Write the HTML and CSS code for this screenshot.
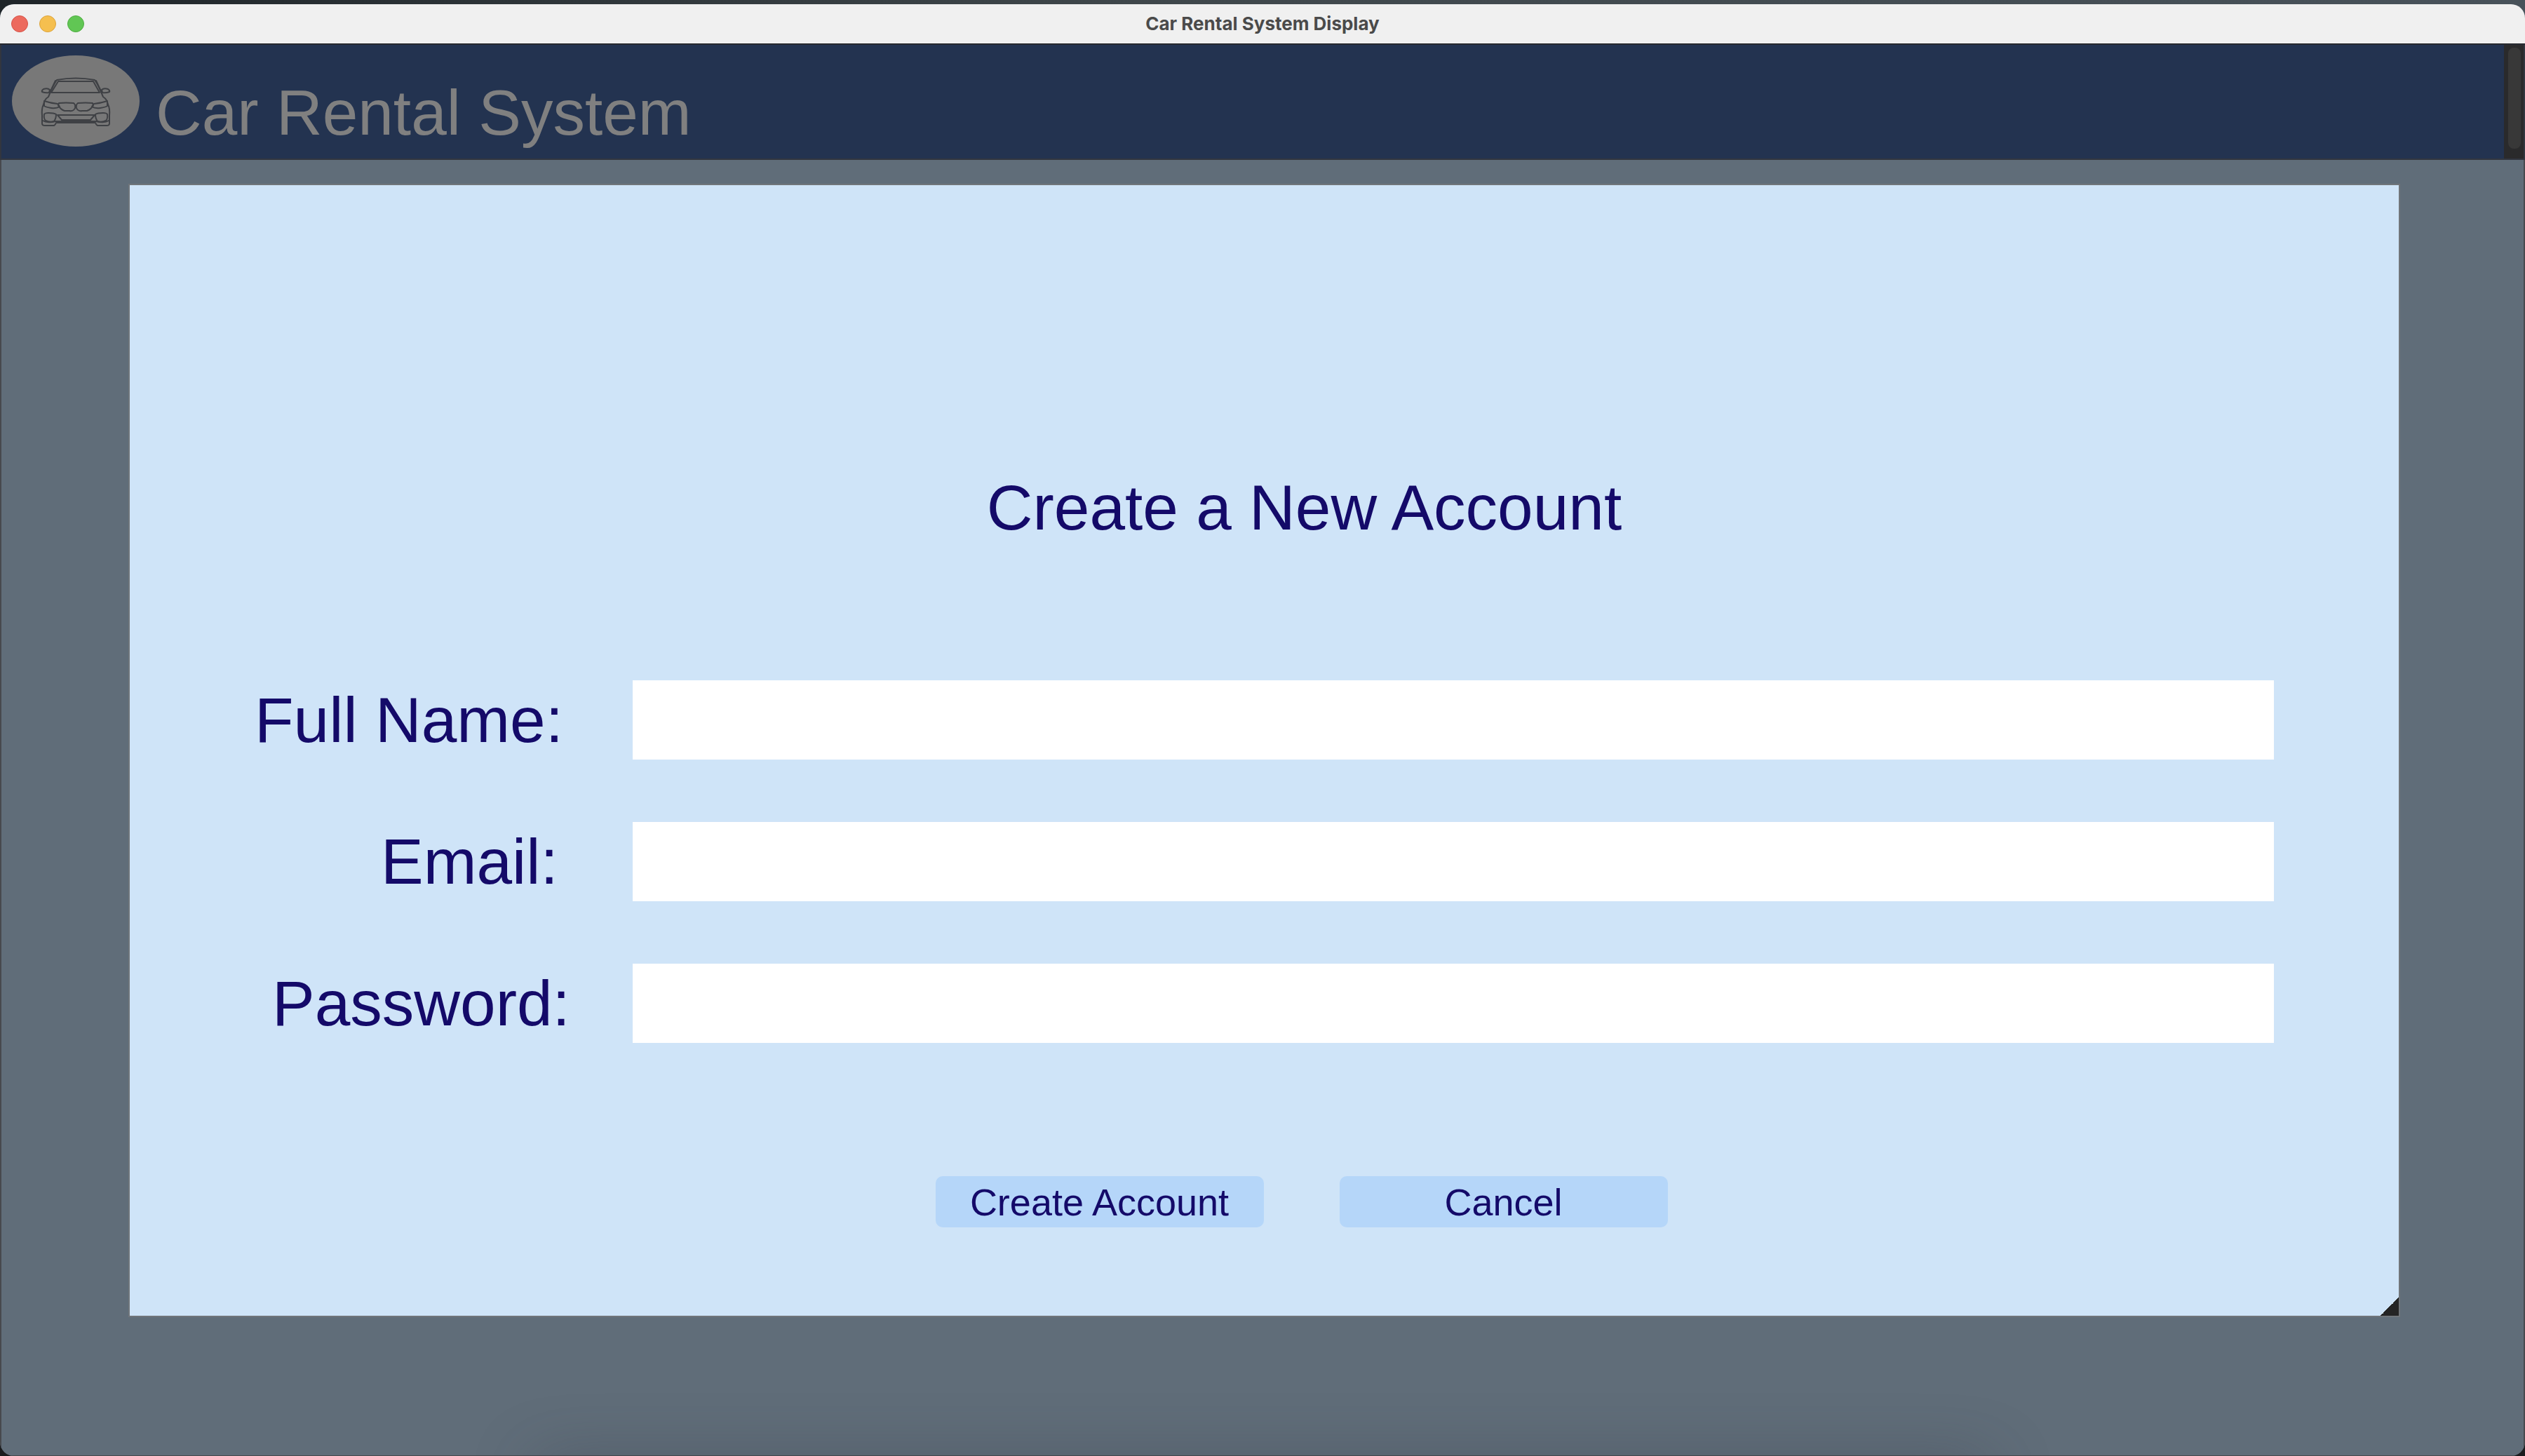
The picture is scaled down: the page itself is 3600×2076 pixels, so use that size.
FILE: index.html
```html
<!DOCTYPE html>
<html lang="en">
<head>
<meta charset="utf-8">
<title>Car Rental System Display</title>
<link rel="stylesheet" href="styles.css">
</head>
<body>
<div class="window">
  <div class="titlebar">
    <div class="lights">
      <button class="light light-close" type="button" aria-label="Close"></button>
      <button class="light light-minimize" type="button" aria-label="Minimize"></button>
      <button class="light light-zoom" type="button" aria-label="Zoom"></button>
    </div>
    <div class="window-title">Car Rental System Display</div>
  </div>
  <header class="app-header">
    <div class="brand">
      <svg class="logo" viewBox="0 0 182 130" aria-hidden="true">
        <ellipse cx="91" cy="65" rx="91" ry="65" fill="#787878"/>
        <g fill="none" stroke="#3f4145" stroke-width="2" stroke-linejoin="round" stroke-linecap="round">
          <path d="M64 35Q91 30 118 35M64 35Q59 42 52 59Q46 63 45 70M118 35Q123 42 130 59Q136 63 137 70"/>
          <path d="M66 37H116L125 53H56Z"/>
          <path d="M62 36L54 53M120 36L128 53"/>
          <path d="M54 49Q51 46 45 48Q42 50 43 52Q48 54 53 53ZM128 49Q131 46 137 48Q140 50 139 52Q134 54 129 53Z"/>
          <path d="M46 65Q55 68 65 69L68 73Q64 76 56 75Q49 74 46 72ZM136 65Q127 68 117 69L114 73Q118 76 126 75Q133 74 136 72Z"/>
          <path d="M67 68Q77 67 88 68Q91 70 90 75Q88 80 82 79H75Q69 77 66 71ZM115 68Q105 67 94 68Q91 70 92 75Q94 80 100 79H107Q113 77 116 71Z"/>
          <path d="M45 70Q42 76 43 86V97Q43 100 47 100H60Q62 99 63 96H119Q120 99 122 100H135Q139 100 139 97V86Q140 76 137 70"/>
          <path d="M46 84Q47 82 52 82Q60 82 63 84Q63 90 60 94Q54 96 48 93Q45 90 46 84ZM136 84Q135 82 130 82Q122 82 119 84Q119 90 122 94Q128 96 134 93Q137 90 136 84Z"/>
          <path d="M65 85H118L112 92H71Z"/>
          <path d="M44 93Q50 97 62 94H120Q132 97 138 93"/>
        </g>
      </svg>
      <h1 class="app-name">Car Rental System</h1>
    </div>
    <div class="scrollbar"><div class="scrollbar-thumb"></div></div>
  </header>
  <main class="stage">
    <form class="dialog">
      <h2 class="dialog-title">Create a New Account</h2>
      <div class="fields">
        <label class="field-label" for="full-name">Full Name:</label>
        <input class="field-input" id="full-name" type="text">
        <label class="field-label field-label-short" for="email">Email:</label>
        <input class="field-input" id="email" type="email">
        <label class="field-label field-label-medium" for="password">Password:</label>
        <input class="field-input" id="password" type="password">
      </div>
      <div class="actions">
        <button class="action" type="submit">Create Account</button>
        <button class="action" type="button">Cancel</button>
      </div>
      <div class="resize-grip"></div>
    </form>
  </main>
  <div class="dock-shadow"></div>
</div>
</body>
</html>
```
FILE: styles.css
```css
* {
  box-sizing: border-box;
}

body {
  margin: 0;
  min-height: 100vh;
  display: flex;
  flex-direction: column;
  padding-top: 6px;
  background: linear-gradient(90deg, #1e2428, #3f474b 45%, #48525a) top / 100% 30px no-repeat #1a1c1e;
  font-family: "Liberation Sans", Arial, sans-serif;
  color: #140a69;
}

.window {
  position: relative;
  flex: 1;
  display: flex;
  flex-direction: column;
  overflow: hidden;
  border-radius: 20px;
  background: #606d79;
}

.titlebar {
  display: grid;
  grid-template-columns: 1fr auto 1fr;
  align-items: center;
  height: 57px;
  padding: 0 16px 1px;
  background: #f0f0f0;
  border-bottom: 1px solid #0a0c10;
}

.lights {
  display: flex;
  gap: 16px;
}

.light {
  width: 24px;
  height: 24px;
  padding: 0;
  border: 1px solid;
  border-radius: 50%;
}

.light-close {
  background: #ec6a5e;
  border-color: #d55347;
}

.light-minimize {
  background: #f5bf4f;
  border-color: #dba33c;
}

.light-zoom {
  background: #61c654;
  border-color: #4fad42;
}

.window-title {
  font: 700 26px/32px Inter, sans-serif;
  color: #4a4a4a;
}

.app-header {
  display: flex;
  justify-content: space-between;
  background: #233350;
  border: 2px solid #32363f;
  border-top-width: 1px;
}

.brand {
  display: flex;
  gap: 23px;
  padding: 15px 15px 17px;
}

.logo {
  width: 182px;
  height: 130px;
}

.app-name {
  margin: 0;
  padding-top: 30px;
  font-size: 91px;
  line-height: 104px;
  height: 130px;
  font-weight: 400;
  color: #808080;
}

.scrollbar {
  width: 28px;
  padding: 4px 4px 14px 6px;
  background: #2a2a2b;
}

.scrollbar-thumb {
  height: 100%;
  border-radius: 8px;
  background: #383838;
}

.stage {
  flex: 1;
  padding: 34px 176px 160px 181px;
  border: 2px solid #47494d;
  border-width: 0 2px 1px;
}

.dialog {
  position: relative;
  display: flex;
  flex-direction: column;
  padding: 408px 178px 126px;
  border: 2px solid #70757a;
  background: #cfe4f8;
}

.dialog-title {
  margin: 0;
  padding-left: 114px;
  text-align: center;
  font-size: 91px;
  line-height: 104px;
  font-weight: 400;
}

.fields {
  display: grid;
  grid-template-columns: 539px 1fr;
  row-gap: 89px;
  margin-top: 194px;
}

.field-label {
  font-size: 91px;
  line-height: 113px;
}

.field-label-short {
  padding-left: 180px;
}

.field-label-medium {
  padding-left: 25px;
}

.field-input {
  width: 100%;
  height: 113px;
  padding: 0 24px;
  border: 0;
  border-radius: 0;
  background: #fff;
  font: 80px "Liberation Sans", Arial, sans-serif;
  color: inherit;
}

.actions {
  display: flex;
  justify-content: center;
  gap: 108px;
  margin-top: 190px;
  padding-left: 106px;
}

.action {
  width: 468px;
  height: 73px;
  padding: 0;
  border: 0;
  border-radius: 10px;
  background: #b5d6f9;
  font: 54px/72px "Liberation Sans", Arial, sans-serif;
  color: inherit;
}

.resize-grip {
  position: absolute;
  right: 0;
  bottom: 0;
  width: 26px;
  height: 26px;
  background: linear-gradient(135deg, transparent 50%, #242424 50%);
}

.dock-shadow {
  position: absolute;
  left: 760px;
  right: 760px;
  bottom: -60px;
  height: 50px;
  border-radius: 40px;
  box-shadow: 0 0 90px 0 rgba(50, 54, 68, 0.4);
}
```
